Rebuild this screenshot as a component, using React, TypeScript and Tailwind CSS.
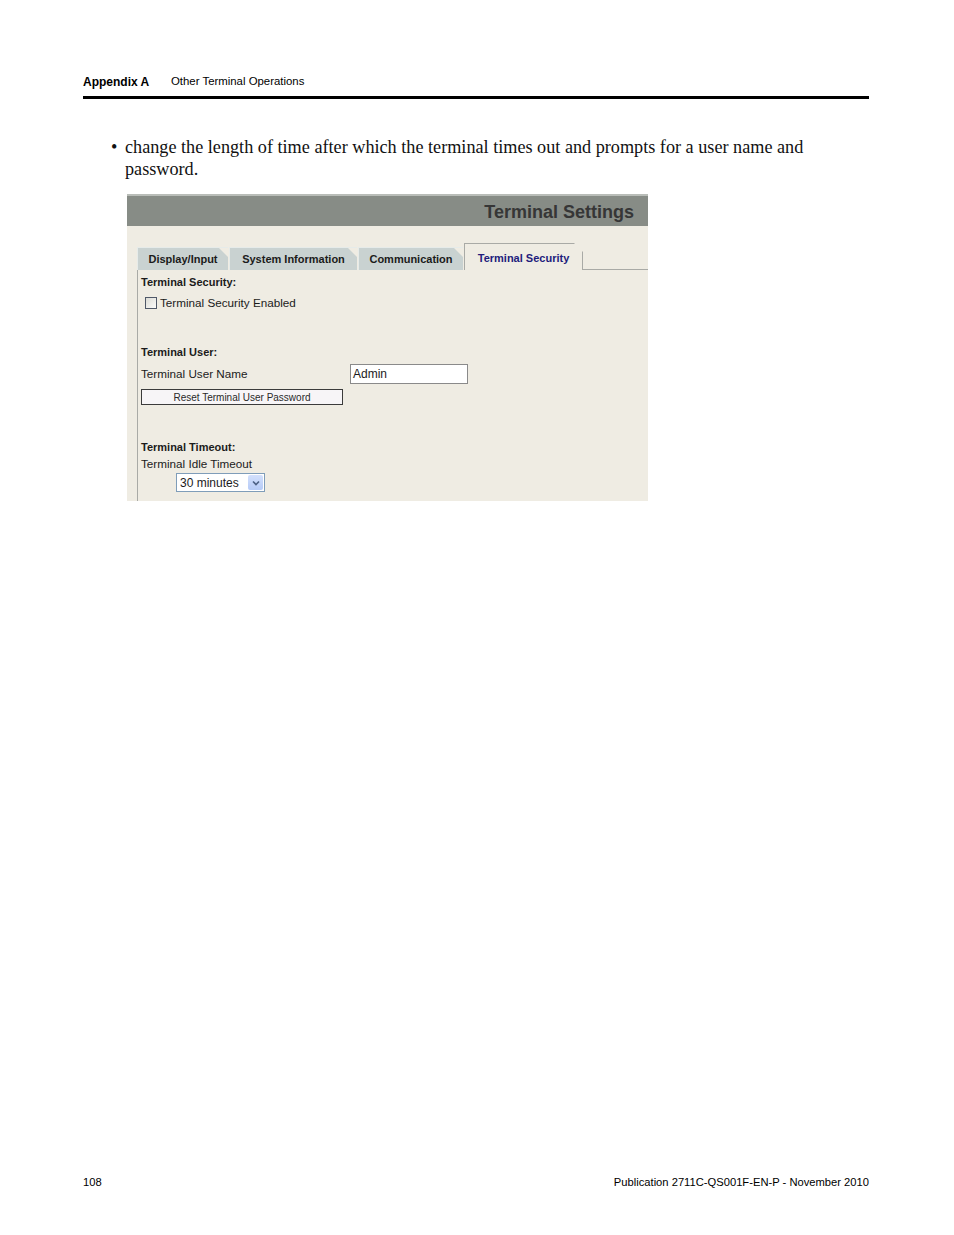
import React from "react";

const narrow = "font-['Liberation_Sans',Arial,sans-serif]";
const ui = "font-['Liberation_Sans',Arial,sans-serif]";

const Tab = ({ label, width }: { label: string; width: string }) => (
  <div
    className={`relative ${width} h-[23px] bg-[#c9d2d1] border-l border-t border-[#e6ebe9] flex items-center justify-center text-[11px] font-bold text-[#1b1b1b] mr-[1px]`}
  >
    {label}
    {/* folded corner */}
    <span className="absolute top-0 right-0 w-0 h-0 border-t-[9px] border-t-[#efece3] border-l-[9px] border-l-transparent" />
  </div>
);

const TerminalSettings = () => (
  <div className={`w-[521px] ml-[44px] mt-[14px] bg-[#efece3] ${ui}`}>
    {/* title bar */}
    <div className="h-[32px] bg-[#878c86] border-t-2 border-[#b9bdb8] flex items-center justify-end pr-[14px]">
      <span className="text-[18px] font-bold text-[#363636] mt-[2px]">Terminal Settings</span>
    </div>

    {/* tabs */}
    <div className="flex items-end pl-[10px] pt-[17px]">
      <Tab label="Display/Input" width="w-[91px]" />
      <Tab label="System Information" width="w-[128px]" />
      <Tab label="Communication" width="w-[105px]" />
      <div className="relative w-[119px] h-[27px] border-l border-t border-r border-[#a9aaa6] flex items-start justify-center pt-[6px] text-[11px] font-bold text-[#221c7c]">
        Terminal Security
        <span className="absolute -top-[1px] -right-[1px] w-0 h-0 border-t-[9px] border-t-[#efece3] border-l-[9px] border-l-transparent" />
      </div>
      <div className="flex-1 border-b border-[#a9aaa6]" />
    </div>

    {/* body */}
    <div className="ml-[10px] border-l border-[#a9aaa6] pl-[3px] pt-[4px] pb-[9px] text-[#1b1b1b]">
      <div className="text-[11px] font-bold leading-[16px]">Terminal Security:</div>
      <div className="mt-[6px] h-[14px] flex items-center pl-[4px] text-[11.7px]">
        <span className="w-[12px] h-[12px] border border-[#4f5868] bg-gradient-to-br from-[#dcdcd6] to-[#fbfbfa] mr-[3px]" />
        Terminal Security Enabled
      </div>

      <div className="mt-[34px] text-[11px] font-bold leading-[16px]">Terminal User:</div>
      <div className="mt-[4px] h-[20px] flex items-center text-[11.7px]">
        <span className="w-[209px]">Terminal User Name</span>
        <div className="w-[118px] h-[20px] bg-white border border-[#8a8a8a] flex items-center pl-[2px] text-[12px]">
          Admin
        </div>
      </div>
      <div className="mt-[5px] w-[202px] h-[16px] border border-[#3b3b3b] bg-[#f7f5f7] flex items-center justify-center text-[10px] text-[#2a2a2a]">
        Reset Terminal User Password
      </div>

      <div className="mt-[34px] text-[11px] font-bold leading-[16px]">Terminal Timeout:</div>
      <div className="mt-[2px] text-[11.7px] leading-[14px]">Terminal Idle Timeout</div>
      <div className="mt-[2px] ml-[35px] w-[89px] h-[19px] bg-white border border-[#7f9db9] flex items-center text-[12px]">
        <span className="flex-1 pl-[3px]">30 minutes</span>
        <span className="w-[15px] h-[15px] mr-[1px] bg-gradient-to-b from-[#d3e0fc] to-[#b6cbf7] rounded-[2px] flex items-center justify-center">
          <svg width="8" height="6" viewBox="0 0 8 6">
            <path d="M1 1.5 L4 4.5 L7 1.5" stroke="#4d6185" strokeWidth="1.6" fill="none" />
          </svg>
        </span>
      </div>
    </div>
  </div>
);

export default function App() {
  return (
    <div className="w-[954px] h-[1235px] bg-white flex flex-col pl-[83px] pr-[85px] text-black">
      {/* running header */}
      <div className={`mt-[74px] flex items-center h-[16px] ${narrow}`}>
        <span className="font-bold w-[88px] text-[12px]">Appendix A</span>
        <span className="text-[11.4px]">Other Terminal Operations</span>
      </div>
      <div className="mt-[6px] h-[3px] bg-black" />

      <div className="flex-1">
        {/* bullet text */}
        <div className="mt-[37px] flex font-['Liberation_Serif','Times_New_Roman',serif] text-[18.2px] leading-[22px] text-[#111]">
          <span className="w-[42px] pl-[28px] shrink-0">•</span>
          <p className="w-[700px]">
            change the length of time after which the terminal times out and prompts for a user name and password.
          </p>
        </div>

        <TerminalSettings />
      </div>

      {/* footer */}
      <div className={`mb-[44px] flex justify-between items-center text-[11.2px] ${narrow}`}>
        <span>108</span>
        <span>Publication 2711C-QS001F-EN-P - November 2010</span>
      </div>
    </div>
  );
}
